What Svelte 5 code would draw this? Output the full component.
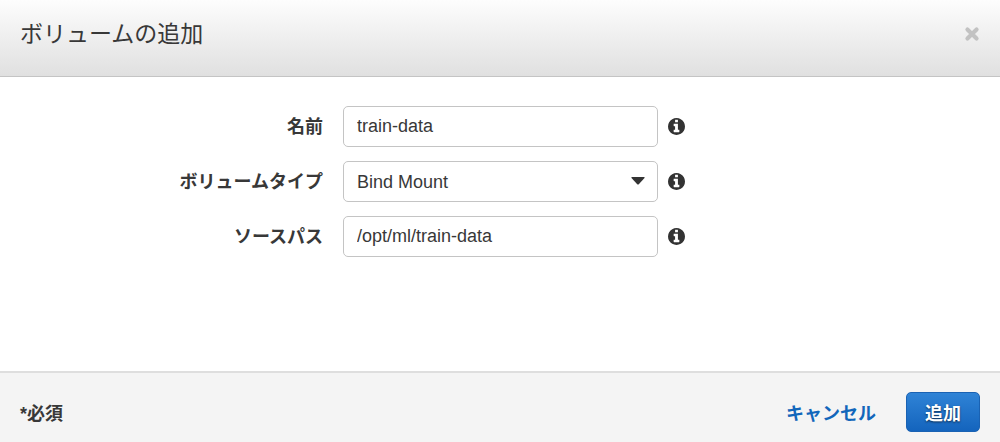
<script>
	let name = $state('train-data');
	let type = $state('Bind Mount');
	let source = $state('/opt/ml/train-data');
</script>

{#snippet info(label)}
	<button class="info" type="button" aria-label={label}>
		<svg viewBox="128 128 1536 1536" aria-hidden="true">
			<path
				d="M1152 1376v-160q0-14-9-23t-23-9h-96v-512q0-14-9-23t-23-9h-320q-14 0-23 9t-9 23v160q0 14 9 23t23 9h96v320h-96q-14 0-23 9t-9 23v160q0 14 9 23t23 9h448q14 0 23-9t9-23zm-128-896v-160q0-14-9-23t-23-9h-192q-14 0-23 9t-9 23v160q0 14 9 23t23 9h192q14 0 23-9t9-23zm640 416q0 209-103 385.5t-279.5 279.5-385.5 103-385.5-103-279.5-279.5-103-385.5 103-385.5 279.5-279.5 385.5-103 385.5 103 279.5 279.5 103 385.5z"
			/>
		</svg>
	</button>
{/snippet}

<form class="dialog" onsubmit={(e) => e.preventDefault()}>
	<header>
		<h1>ボリュームの追加</h1>
		<button class="close" type="button" aria-label="閉じる">
			<svg viewBox="0 0 14 14" aria-hidden="true">
				<path d="M3 3l8 8M11 3l-8 8" />
			</svg>
		</button>
	</header>

	<div class="fields">
		<label for="name">名前</label>
		<input id="name" type="text" bind:value={name} />
		{@render info('名前の情報')}

		<label for="type">ボリュームタイプ</label>
		<div class="select">
			<select id="type" bind:value={type}>
				<option>Bind Mount</option>
			</select>
			<svg viewBox="0 0 14 8" aria-hidden="true">
				<path d="M1 0h12q1 0 .5 1L8 7q-1 1-2 0L.5 1Q0 0 1 0z" />
			</svg>
		</div>
		{@render info('ボリュームタイプの情報')}

		<label for="source">ソースパス</label>
		<input id="source" type="text" bind:value={source} />
		{@render info('ソースパスの情報')}
	</div>

	<footer>
		<span class="required">*必須</span>
		<button class="cancel" type="button">キャンセル</button>
		<button class="add" type="submit">追加</button>
	</footer>
</form>

<style>
	:global(body) {
		margin: 0;
		background: #fff;
	}
	.dialog {
		display: flex;
		flex-direction: column;
		min-height: 100vh;
		font-family: 'Liberation Sans', 'Noto Sans CJK JP', sans-serif;
		font-size: 18px;
		color: #383838;
	}
	button,
	input,
	select {
		font: inherit;
		color: inherit;
	}
	button {
		cursor: pointer;
	}
	header {
		display: flex;
		align-items: center;
		justify-content: space-between;
		padding: 16px 20px 24px;
		background: linear-gradient(#fdfdfd, #e0e0e0);
		border-bottom: 1px solid #c4c4c4;
	}
	h1 {
		margin: 0;
		font-size: 23px;
		font-weight: 400;
		line-height: 36px;
	}
	.close {
		padding: 0;
		border: 0;
		background: none;
	}
	.close svg {
		display: block;
		width: 16px;
		height: 16px;
		fill: none;
		stroke: #c2c2c2;
		stroke-width: 3.6;
		stroke-linecap: round;
	}
	.fields {
		flex: 1;
		display: grid;
		grid-template-columns: 323fr 315fr 322fr;
		align-content: start;
		align-items: center;
		gap: 14px 0;
		padding: 29px 20px;
	}
	label {
		padding-right: 20px;
		font-weight: 700;
		line-height: 24px;
		text-align: right;
	}
	input,
	select {
		box-sizing: border-box;
		width: 100%;
		height: 41px;
		padding: 0 13px;
		border: 1px solid #c4c4c4;
		border-radius: 5px;
		background: #fff;
	}
	select {
		display: block;
		appearance: none;
	}
	.select {
		position: relative;
	}
	.select svg {
		position: absolute;
		top: 16px;
		right: 13px;
		width: 14px;
		height: 8px;
		fill: #333;
		pointer-events: none;
	}
	.info {
		justify-self: start;
		margin-left: 10px;
		padding: 0;
		border: 0;
		background: none;
	}
	.info svg {
		display: block;
		width: 17px;
		height: 17px;
		fill: #333;
	}
	footer {
		display: flex;
		align-items: center;
		padding: 19px 20px 10px;
		background: #f4f4f4;
		border-top: 2px solid #dedede;
		font-weight: 700;
	}
	.required {
		flex: 1;
	}
	.cancel {
		margin-right: 30px;
		padding: 0;
		border: 0;
		background: none;
		color: #1166bb;
	}
	.add {
		height: 40px;
		padding: 0 18px;
		border: 1px solid #1a62b3;
		border-radius: 5px;
		background: linear-gradient(#2f83d6, #1464bd);
		color: #fff;
		text-shadow: 0 1px 2px rgba(0, 0, 0, 0.6);
	}
</style>
